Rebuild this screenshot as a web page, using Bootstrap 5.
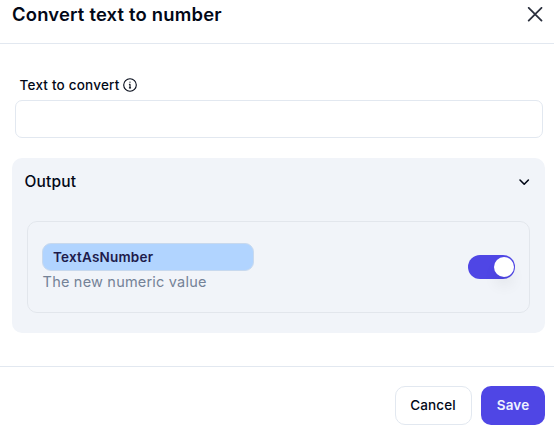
<!DOCTYPE html>
<html lang="en">
<head>
<meta charset="utf-8">
<meta name="viewport" content="width=device-width, initial-scale=1">
<title>Convert text to number</title>
<link href="https://cdn.jsdelivr.net/npm/bootstrap@5.3.0/dist/css/bootstrap.min.css" rel="stylesheet">
<style>
body{font-family:Inter,"Liberation Sans",sans-serif;font-optical-sizing:none;letter-spacing:.2px;color:#020817;background:#fff;height:433px;overflow:hidden}
svg{display:block;fill:none;stroke:currentColor;stroke-linecap:round;stroke-linejoin:round}
.dlg-head{height:44px;padding:0 11px 14px 12px;border-bottom:1px solid #e2e8f0}
.dlg-title{font-size:18.4px;line-height:28px;font-weight:600;padding-bottom:2px}
.close-x{color:#2b303e}
.dlg-main{height:322px;padding:31px 9px 0 12px}
.field{padding:0 2px 0 3px}
.field-label{font-size:13.5px;line-height:20px;font-weight:500;padding-left:4.6px;gap:3.5px;margin-bottom:5px}
.field .form-control{height:38px;border-color:#e2e8f0;border-radius:7px}
.panel{margin-top:20px;height:175px;border-radius:10px;background:#f1f4f9}
.panel-head{height:48px;padding:0 13px 0 12.4px;font-size:15.5px;font-weight:500}
.out-item{margin:15px 15px 0;height:92px;border:1px solid #e2e6ec;border-radius:10px;padding:0 14px}
.chip{width:212px;height:28px;border:1px solid #c8d9ee;border-radius:9px;background:#b1d4ff;color:#1e1b4b;font-size:13.5px;font-weight:600;padding-left:10px;line-height:26px}
.desc{font-size:14.5px;line-height:22px;color:#748297;padding-left:.6px;margin-bottom:-2px}
.toggle{width:47px;height:24px;background:#4f46e5;padding:2px 1px}
.knob{width:20px;height:20px;background:#fff;box-shadow:0 10px 15px -3px rgba(0,0,0,.1)}
.dlg-foot{height:67px;padding:19px 9px 0;border-top:1px solid #e2e8f0;gap:9px}
.dlg-foot .btn{height:39px;font-size:13.5px;letter-spacing:.15px;padding:0 0 1px;border-radius:10px}
.dlg-foot .btn-cancel{width:77px;border:1px solid #e2e8f0;color:#020817;font-weight:500;padding-right:1px}
.btn-save{width:64px;background:#4f46e5;color:#eef2ff;font-weight:600}
</style>
<script src="https://cdn.jsdelivr.net/npm/bootstrap@5.3.0/dist/js/bootstrap.bundle.min.js"></script>
</head>
<body>
<header class="dlg-head d-flex align-items-center justify-content-between">
<h1 class="dlg-title mb-0">Convert text to number</h1>
<svg class="close-x" width="16" height="16" viewBox="0 0 16 16" stroke-width="1.8" role="button" aria-label="Close"><path d="M1.7 .8l12.8 12.8M14.5 .8L1.7 13.6"/></svg>
</header>
<main class="dlg-main">
<div class="field">
<label class="field-label d-flex align-items-center" for="source"><span>Text to convert</span>
<svg width="14" height="14" viewBox="0 0 14 14" stroke-width="1.1"><circle cx="7" cy="7" r="6.3"/><path d="M6.4 6.2H7v3.6M6.4 9.9h1.2"/><circle cx="7" cy="4.2" r=".15"/></svg>
</label>
<input id="source" class="form-control" type="text">
</div>
<section class="panel overflow-hidden">
<div class="panel-head d-flex align-items-center justify-content-between"><span>Output</span>
<svg width="16" height="16" viewBox="0 0 16 16" stroke-width="1.6"><path d="M4 6l4.2 4.2L12.4 6"/></svg>
</div>
<div class="out-item d-flex align-items-center justify-content-between">
<div class="out-text"><div class="chip">TextAsNumber</div><div class="desc">The new numeric value</div></div>
<div class="toggle rounded-pill d-flex justify-content-end" role="switch" aria-checked="true"><span class="knob rounded-circle"></span></div>
</div>
</section>
</main>
<footer class="dlg-foot d-flex justify-content-end">
<button class="btn btn-cancel" type="button">Cancel</button>
<button class="btn btn-save" type="button">Save</button>
</footer>
</body>
</html>
